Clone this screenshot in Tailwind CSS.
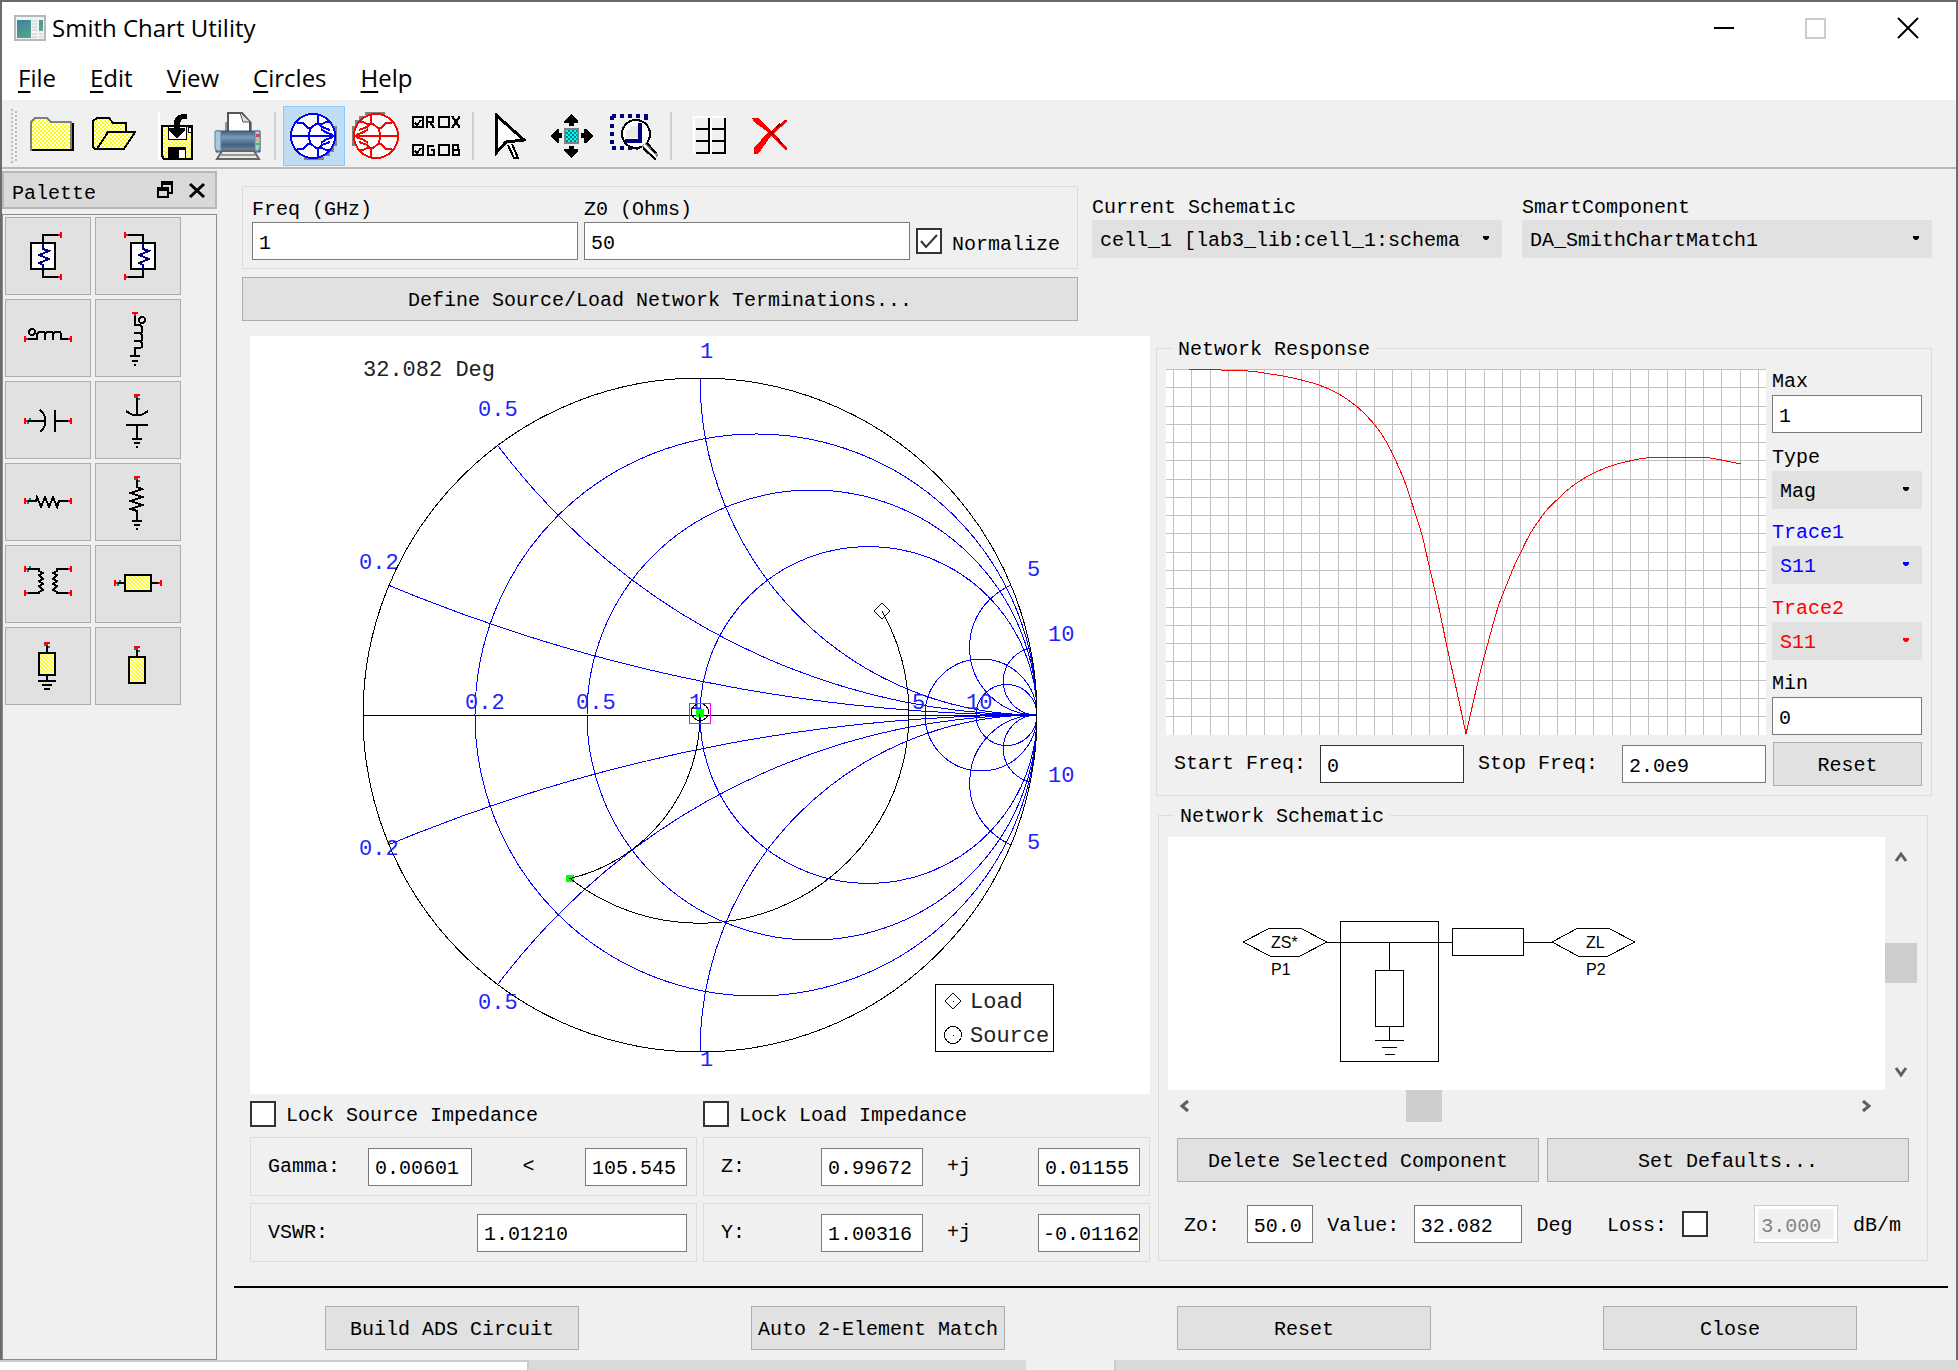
<!DOCTYPE html>
<html lang="en">

<head>
   <meta charset="UTF-8">
   <meta name="viewport" content="width=device-width, initial-scale=1.0">
   <title>Smith Chart Utility</title>
   <script src="https://cdn.jsdelivr.net/npm/@tailwindcss/browser@4"></script>
</head>

<body class="flex min-h-screen flex-col bg-[#f0f0f0] font-['Liberation_Mono',monospace] text-xl leading-6 text-black">
   <!-- shared patterns and icon parts -->
   <svg class="absolute size-0" aria-hidden="true">
      <defs>
         <pattern id="yellow" width="4" height="4" patternUnits="userSpaceOnUse">
            <path fill="#fff" stroke="none" d="M0 0h4v4H0z" />
            <path fill="#ff0" stroke="none" d="M0 0h2v2H0zM2 2h2v2H2z" />
         </pattern>
         <pattern id="cyan" width="4" height="4" patternUnits="userSpaceOnUse">
            <path fill="#0ff" stroke="none" d="M0 0h4v4H0z" />
            <path fill="#008080" stroke="none" d="M0 0h2v2H0zM2 2h2v2H2z" />
         </pattern>
         <symbol id="smith" viewBox="0 0 48 48">
            <path fill="#808080" d="M44 14h3v20h-3v6h-4v4h-6v4H14v-3h20z" />
            <circle cx="23" cy="24" r="22" fill="#fff" stroke="none" />
            <g fill="none" stroke="currentColor" stroke-width="2" shape-rendering="crispEdges">
               <circle cx="23" cy="24" r="22" />
               <path d="M1 24h44M32 12h-6l-5 4-2 5v6l2 5 5 4h6M7 11h6l5 5 3 1M7 37h6l5-5 3-1M28 3v8l4 4 8 3M28 45v-8l4-4 8-3M32 12l4-2h5M32 36l4 2h5M31 17l4 3 8 3M31 31l4-3 8-3" />
            </g>
         </symbol>
      </defs>
   </svg>

   <div class="flex flex-1 flex-col border-x-2 border-t-2 border-[#6b6b6b]">
      <header class="flex h-13 items-center justify-between bg-white pr-9 pl-3 font-['Open_Sans',sans-serif] text-2xl">
         <div class="flex items-center gap-[6px]">
            <svg class="h-7 w-8" viewBox="0 0 32 28">
               <defs>
                  <linearGradient id="app" x2="1" y2="1">
                     <stop stop-color="#3c7fa8" />
                     <stop offset="1" stop-color="#63b573" />
                  </linearGradient>
               </defs>
               <path fill="#f1f3f4" stroke="#b3b9bd" stroke-width="2" d="M1 2h30v24H1z" />
               <path fill="url(#app)" d="M3 6h14v18H3zM25 6h4v11h-4z" />
               <path stroke="#c4c8cb" d="M18 7h5M18 10h5M18 13h5M18 16h5M18 20h5M18 23h5M25 20h4M25 23h4" />
            </svg>
            <h1>Smith Chart Utility</h1>
         </div>
         <div class="flex items-center gap-17">
            <button type="button" aria-label="Minimize"><svg class="size-6" viewBox="0 0 24 24"><path stroke="#000" stroke-width="2" d="M2 12h20" /></svg></button>
            <button type="button" aria-label="Maximize" disabled><svg class="size-6" viewBox="0 0 24 24"><path fill="none" stroke="#ccc" stroke-width="2" d="M2 3h19v19H2z" /></svg></button>
            <button type="button" aria-label="Close window"><svg class="size-6" viewBox="0 0 24 24"><path stroke="#000" stroke-width="2" d="m2 2 20 20M22 2 2 22" /></svg></button>
         </div>
      </header>

      <nav class="flex h-12 items-center gap-[34px] border-b-2 border-[#eee] bg-white pt-[2px] pl-4 font-['Open_Sans',sans-serif] text-2xl">
         <a href="#"><u class="underline-offset-4">F</u>ile</a>
         <a href="#"><u class="underline-offset-4">E</u>dit</a>
         <a href="#"><u class="underline-offset-4">V</u>iew</a>
         <a href="#"><u class="underline-offset-4">C</u>ircles</a>
         <a href="#"><u class="underline-offset-4">H</u>elp</a>
      </nav>

      <div class="flex h-[67px] items-center border-b-2 border-[#b9b9b9] pt-[2px] pl-1" role="toolbar">
         <svg class="mx-1 h-14 w-2" viewBox="0 0 8 56"><path stroke="#bbb" stroke-width="2" stroke-dasharray="2 2" d="M2 1v54M6 3v52" /></svg>
         <button type="button" aria-label="New" class="flex w-15 justify-center">
            <svg class="h-12 w-11" viewBox="0 0 44 48" shape-rendering="crispEdges">
               <path fill="url(#yellow)" stroke="#808080" stroke-width="2" d="M1 38V10l4-4h12l4 4h20v28z" />
               <path fill="none" stroke="#000" stroke-width="2" d="M2 38h41V11" />
            </svg>
         </button>
         <button type="button" aria-label="Open" class="flex w-16 justify-center">
            <svg class="h-12 w-11" viewBox="0 0 44 48" shape-rendering="crispEdges">
               <path fill="url(#yellow)" stroke="#000" stroke-width="2" d="M1 36V9l4-3h12l4 5h13v9M1 36l4 1 11-17h27L32 37H4z" />
            </svg>
         </button>
         <button type="button" aria-label="Save" class="mr-5 ml-3 flex w-9 justify-center border-l-2 border-white">
            <svg class="h-12 w-8" viewBox="0 0 32 48" shape-rendering="crispEdges">
               <path fill="url(#yellow)" stroke="#000" stroke-width="2" d="M1 14h30v33H3l-2-3z" />
               <path fill="#fff" stroke="#000" d="M7 14h18v13H7zM27 15h3v5h-3z" />
               <path d="M7 35h18v12H7zM8 16h16v3l-8 7-8-7zM13 18V9l3-5 5-2h5v5h-5l-2 4v7z" />
               <path fill="#fff" d="M18 38h6v8h-6z" />
            </svg>
         </button>
         <button type="button" aria-label="Print">
            <svg class="h-12 w-12" viewBox="0 0 48 48">
               <defs>
                  <linearGradient id="prn" x2="0" y2="1">
                     <stop stop-color="#405d7c" />
                     <stop offset=".3" stop-color="#7d9ab8" />
                     <stop offset=".65" stop-color="#43607e" />
                     <stop offset="1" stop-color="#7693ad" />
                  </linearGradient>
               </defs>
               <path fill="#7e9aaf" d="M11 10h27v12H11z" />
               <path fill="#fff" stroke="#555" stroke-width="2" d="M14 21V1h14l8 9v11z" />
               <path fill="#ddd" stroke="#555" d="m26 1 3 9h7" />
               <path fill="url(#prn)" stroke="#395471" d="M2 19h44v21H2z" />
               <path fill="#a3cbdc" stroke="#5d8198" d="M1 19h6v20H3l-2-3zM41 19h5v17l-2 3h-3z" />
               <path fill="#d9415a" d="M42 22h4v3h-4z" />
               <path fill="#e9b04a" d="M42 27h4v2h-4z" />
               <path fill="#55b277" d="M42 31h4v2h-4z" />
               <path fill="#e8e8e8" stroke="#666" stroke-width="2" d="M8 39h32l5 8H3z" />
               <path stroke="#999" stroke-width="2" d="M7 43h34" />
            </svg>
         </button>
         <div class="ml-3 h-12 w-[2px] bg-[#cfcfcf]"></div>
         <button type="button" aria-label="Impedance chart" aria-pressed="true" class="ml-[7px] flex h-15 w-[62px] items-center justify-center border border-[#90c8f6] bg-[#c0dcf3] text-[#00f]"><svg class="size-12"><use href="#smith" /></svg></button>
         <button type="button" aria-label="Admittance chart" class="flex w-15 justify-center text-[#f00]"><svg class="size-12 rotate-180"><use href="#smith" /></svg></button>
         <button type="button" aria-label="R X G B circles" class="ml-[7px]">
            <svg class="h-12 w-12" viewBox="0 0 48 48" fill="none" stroke="#000" stroke-width="2" shape-rendering="crispEdges">
               <path d="M1 5h10v10H1zM27 5h10v10H27zM1 33h10v10H1zM27 33h10v10H27zM3 11l2 2 4-5M3 39l2 2 4-5M15 16V5h6v5h-6M18 10l4 6M40 4l8 12M48 4l-8 12M22 34h-6v9h6v-5h-3M41 43V33h5v5h-5 6v5z" />
            </svg>
         </button>
         <div class="ml-3 h-12 w-[2px] bg-[#cfcfcf]"></div>
         <button type="button" aria-label="Select" class="ml-5">
            <svg class="h-12 w-8" viewBox="0 0 32 48" shape-rendering="crispEdges"><path fill="#fff" stroke="#000" stroke-width="2" d="m14 33 6 13h4l-6-14" /><path fill="#fff" stroke="#000" stroke-width="3" d="M2 3v38l10-11 18-2z" /></svg>
         </button>
         <button type="button" aria-label="Move" class="ml-6">
            <svg class="h-12 w-11" viewBox="0 0 44 48" shape-rendering="crispEdges">
               <path fill="url(#cyan)" stroke="#808080" stroke-width="2" d="M15 17h13v14H15z" />
               <path d="m21 2 7 7v2h-4v3h-5v-3h-5V9zM21 46l7-7v-2h-4v-3h-5v3h-5v2zM0 24l7-7h2v4h3v5H9v5H7zM43 24l-7-7h-2v4h-3v5h3v5h2z" />
            </svg>
         </button>
         <button type="button" aria-label="Zoom area" class="ml-4">
            <svg class="h-12 w-12" viewBox="0 0 48 48" shape-rendering="crispEdges">
               <path fill="none" stroke="#000080" stroke-width="4" stroke-dasharray="4 4" d="M2 4h36M2 4v32M2 36h26M36 4v10" />
               <circle cx="26" cy="22" r="14" fill="#fff" stroke="#000" stroke-width="2" />
               <path fill="none" stroke="#000080" stroke-width="4" d="M30 11v18H15" />
               <path fill="#e8e8e8" d="M16 18h4v-4h8v12H16z" />
               <path stroke="#808080" stroke-width="6" d="m34 32 12 13" />
               <path stroke="#fff" stroke-width="2" d="m34 33 12 12" />
               <path stroke="#000" stroke-width="2" d="m37 31 9 10M33 36l13 12" />
            </svg>
         </button>
         <div class="ml-3 h-12 w-[2px] bg-[#cfcfcf]"></div>
         <button type="button" aria-label="Grid" class="ml-5">
            <svg class="h-12 w-9" viewBox="0 0 36 48" shape-rendering="crispEdges" fill="none" stroke-width="2"><path stroke="#fff" d="M2 42V5h32M19 5v36" /><path stroke="#000" d="M4 41h12M4 29h13M4 17h13M17 6v36M20 41h13M20 29h13M20 17h13M33 6v36" /></svg>
         </button>
         <button type="button" aria-label="Delete" class="ml-6">
            <svg class="h-12 w-9" viewBox="0 0 36 48" shape-rendering="crispEdges"><path fill="#f00" d="M0 6h6l13 13L33 8h2v2L22 21l13 15v2h-2L19 24 6 42H2v-6l14-16L3 11z" /><path stroke="#900000" stroke-width="2" d="M17 20h5M18 22h4M24 16l4-4M25 26l5 6" /></svg>
         </button>
      </div>

      <div class="flex flex-1">
         <aside class="flex w-[215px] flex-col pt-[2px]">
            <div class="flex h-[38px] items-center justify-between border-2 border-[#b8b8b8] bg-[#d9d9d9] pr-2 pl-2">
               <h2 class="pt-2">Palette</h2>
               <div class="flex gap-3">
                  <button type="button" aria-label="Float"><svg class="size-5" viewBox="0 0 20 20" shape-rendering="crispEdges"><path d="M6 1h12v13h-4v4H2V7h4zM8 5v2h6v5h2V5zM4 11v5h8v-5z" fill-rule="evenodd" /></svg></button>
                  <button type="button" aria-label="Close palette"><svg class="size-5" viewBox="0 0 20 20"><path stroke="#000" stroke-width="3" d="m3 4 14 13M17 4 3 17" /></svg></button>
               </div>
            </div>
            <div class="mt-[5px] flex-1 border border-[#868c94] p-[2px]">
               <div class="grid w-44 grid-cols-2 gap-1 [&>button]:h-[78px] [&>button]:border [&>button]:border-[#adadad] [&>button]:bg-[#e1e1e1] [&_svg]:h-[76px] [&_svg]:w-[84px]">
                  <button type="button" aria-label="Load termination">
                     <svg viewBox="1 1 84 76" shape-rendering="crispEdges" fill="none" stroke="#000" stroke-width="2">
                        <path fill="#fff" d="M26 26h24v26H26z" /><path d="M38 26v-8h16M38 52v8h16" />
                        <path stroke="#000080" d="M38 27v5l6 2-10 4 10 4-10 4 4 2v4" />
                        <path stroke="#f00" d="M53 18h3M56 15v6M53 60h3M56 57v6" />
                     </svg>
                  </button>
                  <button type="button" aria-label="Source termination">
                     <svg viewBox="1 1 84 76" shape-rendering="crispEdges" fill="none" stroke="#000" stroke-width="2">
                        <path fill="#fff" d="M36 26h24v26H36z" /><path d="M48 26v-8H32M48 52v8H32" />
                        <path stroke="#000080" d="M48 27v5l6 2-10 4 10 4-10 4 4 2v4" />
                        <path stroke="#f00" d="M33 18h-3M30 15v6M33 60h-3M30 57v6" />
                     </svg>
                  </button>
                  <button type="button" aria-label="Series inductor">
                     <svg viewBox="1 1 84 76" shape-rendering="crispEdges" fill="none" stroke="#000" stroke-width="2">
                        <path d="M22 40h10v-5l2-2h5l1 2v6M40 35l2-2h5l1 2v6M48 35l2-2h5l1 2v5h9" /><circle cx="27" cy="33" r="3" />
                        <path stroke="#f00" d="M20 37v6M20 40h3M66 37v6M63 40h3" />
                     </svg>
                  </button>
                  <button type="button" aria-label="Shunt inductor">
                     <svg viewBox="1 1 84 76" shape-rendering="crispEdges" fill="none" stroke="#000" stroke-width="2">
                        <path d="M40 15v11h5l2 2v5l-2 1h-6M45 34l2 2v5l-2 1h-6M45 42l2 2v4l-2 1h-5v8M35 57h10M37 62h6M39 66h2" /><circle cx="47" cy="21" r="3" />
                        <path stroke="#f00" d="M37 14h6M40 14v3" />
                     </svg>
                  </button>
                  <button type="button" aria-label="Series capacitor">
                     <svg viewBox="1 1 84 76" shape-rendering="crispEdges" fill="none" stroke="#000" stroke-width="2">
                        <path d="M22 40h18M35 29l3 3 2 4v8l-2 4-3 3M50 29v22M50 40h15" />
                        <path stroke="#008080" d="M22 42h2M24 38h2" /><path stroke="#f00" d="M20 37v6M20 40h3M66 37v6M63 40h3" />
                     </svg>
                  </button>
                  <button type="button" aria-label="Shunt capacitor">
                     <svg viewBox="1 1 84 76" shape-rendering="crispEdges" fill="none" stroke="#000" stroke-width="2">
                        <path d="M42 15v18M31 30l3 2 4 2h8l4-2 3-2M31 44h22M42 44v14M37 58h10M39 62h6M41 66h2" />
                        <path stroke="#008080" d="M39 16h2M43 18h2" /><path stroke="#f00" d="M39 14h6M42 14v3" />
                     </svg>
                  </button>
                  <button type="button" aria-label="Series resistor">
                     <svg viewBox="1 1 84 76" shape-rendering="crispEdges" fill="none" stroke="#000" stroke-width="2">
                        <path d="M22 38h9l1-4 4 10 4-10 4 10 4-10 4 10 2-6h11" />
                        <path stroke="#008080" d="M22 40h2M24 36h2" /><path stroke="#f00" d="M20 35v6M20 38h3M66 35v6M63 38h3" />
                     </svg>
                  </button>
                  <button type="button" aria-label="Shunt resistor">
                     <svg viewBox="1 1 84 76" shape-rendering="crispEdges" fill="none" stroke="#000" stroke-width="2">
                        <path d="M42 15v9l5 2-11 4 11 4-11 4 11 4-11 4 6 2v10M37 58h10M39 62h6M41 66h2" />
                        <path stroke="#008080" d="M39 16h2M43 18h2" /><path stroke="#f00" d="M39 14h6M42 14v3" />
                     </svg>
                  </button>
                  <button type="button" aria-label="Transformer">
                     <svg viewBox="1 1 84 76" shape-rendering="crispEdges" fill="none" stroke="#000" stroke-width="2">
                        <path d="M22 24h12v2l4 2-4 2 4 4-4 2 4 3-4 2 4 4-4 2v1H22M64 24H52v2l-4 2 4 2-4 4 4 2-4 3 4 2-4 4 4 2v1h12" />
                        <path stroke="#008080" d="M22 26h2M24 22h2" /><path stroke="#f00" d="M20 21v6M20 24h3M66 21v6M63 24h3M20 45v6M20 48h3M66 45v6M63 48h3" />
                     </svg>
                  </button>
                  <button type="button" aria-label="Series line">
                     <svg viewBox="1 1 84 76" shape-rendering="crispEdges" fill="none" stroke="#000" stroke-width="2">
                        <path d="M22 38h8M57 38h8" /><path fill="url(#yellow)" d="M30 30h26v16H30z" />
                        <path stroke="#008080" d="M22 40h2M24 36h2" /><path stroke="#f00" d="M20 35v6M20 38h3M66 35v6M63 38h3" />
                     </svg>
                  </button>
                  <button type="button" aria-label="Shorted stub">
                     <svg viewBox="1 1 84 76" shape-rendering="crispEdges" fill="none" stroke="#000" stroke-width="2">
                        <path d="M42 17v8M42 49v5M33 54h18M37 58h10M39 62h6" /><path fill="url(#yellow)" d="M34 26h16v22H34z" />
                        <path stroke="#008080" d="M39 18h2M43 20h2" /><path stroke="#f00" d="M39 16h6M42 16v3" />
                     </svg>
                  </button>
                  <button type="button" aria-label="Open stub">
                     <svg viewBox="1 1 84 76" shape-rendering="crispEdges" fill="none" stroke="#000" stroke-width="2">
                        <path d="M42 21v8" /><path fill="url(#yellow)" d="M34 30h16v26H34z" />
                        <path stroke="#008080" d="M39 22h2M43 24h2" /><path stroke="#f00" d="M39 20h6M42 20v3" />
                     </svg>
                  </button>
               </div>
            </div>
         </aside>

         <main class="min-w-0 flex-1 pt-[17px] pr-2 pl-[17px]">
            <div class="pr-4 pl-2">
               <div class="grid grid-cols-[836fr_840fr] gap-[14px]">
                  <div>
                     <div class="flex h-[83px] items-end gap-[6px] border border-[#dcdcdc] px-[9px] pb-2">
                        <div class="flex-1">
                           <label for="freq" class="block">Freq (GHz)</label>
                           <input id="freq" type="text" value="1" class="h-[38px] w-full border border-[#7a7a7a] bg-white px-[6px] pt-1">
                        </div>
                        <div class="flex-1">
                           <label for="z0" class="block">Z0 (Ohms)</label>
                           <input id="z0" type="text" value="50" class="h-[38px] w-full border border-[#7a7a7a] bg-white px-[6px] pt-1">
                        </div>
                        <label class="flex h-[38px] items-center gap-[10px] pr-2">
                           <span class="relative size-[26px]">
                              <input type="checkbox" checked class="block size-[26px] appearance-none border-2 border-[#333] bg-white">
                              <svg class="pointer-events-none absolute inset-0 size-[26px]" viewBox="0 0 26 26"><path fill="none" stroke="#333" stroke-width="2" d="m5 13 5 6L21 7" /></svg>
                           </span>
                           <span class="pt-2">Normalize</span>
                        </label>
                     </div>
                     <button type="button" class="mt-2 h-11 w-full border border-[#adadad] bg-[#e1e1e1] pt-1">Define Source/Load Network Terminations...</button>
                  </div>
                  <div class="grid grid-cols-2 gap-5 pt-[10px]">
                     <div>
                        <label for="schematic" class="block">Current Schematic</label>
                        <div class="relative">
                           <select id="schematic" class="h-[38px] w-full appearance-none overflow-hidden bg-[#e1e1e1] pt-1 pr-10 pl-2 text-clip"><option>cell_1 [lab3_lib:cell_1:schematic]</option></select>
                           <svg class="pointer-events-none absolute top-4 right-3 h-1 w-2" viewBox="0 0 8 4"><path fill="currentColor" d="M1 0h6v2L5 4H3L1 2z" /></svg>
                        </div>
                     </div>
                     <div>
                        <label for="smart" class="block">SmartComponent</label>
                        <div class="relative">
                           <select id="smart" class="h-[38px] w-full appearance-none bg-[#e1e1e1] pt-1 pl-2"><option>DA_SmithChartMatch1</option></select>
                           <svg class="pointer-events-none absolute top-4 right-3 h-1 w-2" viewBox="0 0 8 4"><path fill="currentColor" d="M1 0h6v2L5 4H3L1 2z" /></svg>
                        </div>
                     </div>
                  </div>
               </div>

               <div class="mt-[15px] grid grid-cols-[908fr_776fr] items-start gap-[6px]">
                  <div class="pl-2">
                     <!-- centre 450,379, unit radius 337 -->
                     <svg class="block h-auto w-full bg-white" viewBox="0 0 900 758" fill="none">
                        <defs>
                           <clipPath id="unit"><circle cx="450" cy="379" r="337" /></clipPath>
                        </defs>
                        <g stroke="#00f" stroke-width="1" shape-rendering="crispEdges">
                           <circle cx="506" cy="379" r="281" />
                           <circle cx="562" cy="379" r="225" />
                           <circle cx="618.5" cy="379" r="168.5" />
                           <circle cx="731" cy="379" r="56" />
                           <circle cx="756.5" cy="379" r="30.5" />
                           <g clip-path="url(#unit)">
                              <circle cx="787" cy="-1306" r="1685" />
                              <circle cx="787" cy="2064" r="1685" />
                              <circle cx="787" cy="-295" r="674" />
                              <circle cx="787" cy="1053" r="674" />
                              <circle cx="787" cy="42" r="337" />
                              <circle cx="787" cy="716" r="337" />
                              <circle cx="787" cy="311.6" r="67.4" />
                              <circle cx="787" cy="446.4" r="67.4" />
                              <circle cx="787" cy="345.3" r="33.7" />
                              <circle cx="787" cy="412.7" r="33.7" />
                           </g>
                        </g>
                        <g class="font-['Liberation_Mono',monospace] text-[22px]" fill="#22f">
                           <text x="450" y="22">1</text>
                           <text x="228" y="80">0.5</text>
                           <text x="109" y="233">0.2</text>
                           <text x="777" y="240">5</text>
                           <text x="798" y="305">10</text>
                           <text x="215" y="373">0.2</text>
                           <text x="326" y="373">0.5</text>
                           <text x="439" y="373">1</text>
                           <text x="662" y="373">5</text>
                           <text x="716" y="373">10</text>
                           <text x="798" y="446">10</text>
                           <text x="777" y="513">5</text>
                           <text x="109" y="519">0.2</text>
                           <text x="228" y="673">0.5</text>
                           <text x="450" y="730">1</text>
                           <g fill="#222">
                              <text x="113" y="40">32.082 Deg</text>
                              <text x="720" y="672">Load</text>
                              <text x="720" y="706">Source</text>
                           </g>
                        </g>
                        <g stroke="#000" stroke-width="1" shape-rendering="crispEdges">
                           <circle cx="450" cy="379" r="337" />
                           <path d="M114 379.500h673" />
                           <path fill="#0f0" stroke="none" d="M316 539h8v7h-8zM446 373h8v8h-8z" />
                           <path d="M632 275A209.5 209.5 0 0 1 320 542.5A168.5 168.5 0 0 0 450 377" />
                           <path d="m632 267 8 8-8 8-8-8zM703 657l8 8-8 8-8-8zM703 665h1M703 699h1M632 275h1" />
                           <circle cx="450" cy="376" r="8.5" />
                           <circle cx="703" cy="699" r="8.5" />
                           <path d="M685.5 648.5h118v67h-118z" />
                           <path stroke="#f0f" d="M439.5 367.5h21v20h-21z" />
                        </g>
                     </svg>

                     <div class="grid grid-cols-2 gap-x-[6px] gap-y-[7px]">
                        <label class="flex h-9 items-center gap-[10px] pt-1">
                           <input type="checkbox" class="size-[26px] appearance-none border-2 border-[#333] bg-white">
                           <span class="pt-1">Lock Source Impedance</span>
                        </label>
                        <label class="flex h-9 items-center gap-[10px] pt-1">
                           <input type="checkbox" class="size-[26px] appearance-none border-2 border-[#333] bg-white">
                           <span class="pt-1">Lock Load Impedance</span>
                        </label>
                        <div class="flex h-[59px] items-center justify-between border border-[#dcdcdc] pr-[9px] pl-[17px]">
                           <label for="gamma" class="w-[100px]">Gamma:</label>
                           <input id="gamma" type="text" value="0.00601" class="h-[38px] w-[104px] border border-[#7a7a7a] bg-white pt-1 pl-[6px]">
                           <span class="flex-1 text-center">&lt;</span>
                           <input aria-label="Gamma angle" type="text" value="105.545" class="h-[38px] w-[102px] border border-[#7a7a7a] bg-white pt-1 pl-[6px]">
                        </div>
                        <div class="flex h-[59px] items-center border border-[#dcdcdc] pr-[9px] pl-[17px]">
                           <label for="z" class="w-[100px]">Z:</label>
                           <input id="z" type="text" value="0.99672" class="h-[38px] w-[102px] border border-[#7a7a7a] bg-white pt-1 pl-[6px]">
                           <span class="flex-1 pl-6">+j</span>
                           <input aria-label="Z imaginary" type="text" value="0.01155" class="h-[38px] w-[102px] border border-[#7a7a7a] bg-white pt-1 pl-[6px]">
                        </div>
                        <div class="flex h-[59px] items-center justify-between border border-[#dcdcdc] pr-[9px] pl-[17px]">
                           <label for="vswr">VSWR:</label>
                           <input id="vswr" type="text" value="1.01210" class="h-[38px] w-[210px] border border-[#7a7a7a] bg-white pt-1 pl-[6px]">
                        </div>
                        <div class="flex h-[59px] items-center border border-[#dcdcdc] pr-[9px] pl-[17px]">
                           <label for="y" class="w-[100px]">Y:</label>
                           <input id="y" type="text" value="1.00316" class="h-[38px] w-[102px] border border-[#7a7a7a] bg-white pt-1 pl-[6px]">
                           <span class="flex-1 pl-6">+j</span>
                           <input aria-label="Y imaginary" type="text" value="-0.01162" class="h-[38px] w-[102px] border border-[#7a7a7a] bg-white pt-1 pl-[4px]">
                        </div>
                     </div>
                  </div>

                  <div>
                     <fieldset class="border border-[#dcdcdc] px-[9px] pt-[9px] pb-[9px]">
                        <legend class="ml-[6px] px-[6px] pt-1 leading-5">Network Response</legend>
                        <div class="flex gap-[6px]">
                           <svg class="block h-[366px] min-w-0 flex-1 bg-white" viewBox="0 0 600 366" preserveAspectRatio="none" fill="none">
                              <path id="grid" stroke="#c0c0c0" shape-rendering="crispEdges" />
                              <path id="s11" stroke="#f00" shape-rendering="crispEdges" />
                           </svg>
                           <div class="flex w-[150px] flex-col justify-between">
                              <div>
                                 <label for="max" class="block leading-[26px]">Max</label>
                                 <input id="max" type="text" value="1" class="block h-[38px] w-full border border-[#7a7a7a] bg-white px-[6px] pt-1">
                              </div>
                              <div>
                                 <label for="type" class="block leading-[26px]">Type</label>
                                 <div class="relative">
                                    <select id="type" class="block h-[38px] w-full appearance-none bg-[#e1e1e1] pt-1 pl-2"><option>Mag</option></select>
                                    <svg class="pointer-events-none absolute top-4 right-3 h-1 w-2" viewBox="0 0 8 4"><path fill="currentColor" d="M1 0h6v2L5 4H3L1 2z" /></svg>
                                 </div>
                              </div>
                              <div class="text-[#00f]">
                                 <label for="trace1" class="block leading-[26px]">Trace1</label>
                                 <div class="relative">
                                    <select id="trace1" class="block h-[38px] w-full appearance-none bg-[#e1e1e1] pt-1 pl-2"><option>S11</option></select>
                                    <svg class="pointer-events-none absolute top-4 right-3 h-1 w-2" viewBox="0 0 8 4"><path fill="currentColor" d="M1 0h6v2L5 4H3L1 2z" /></svg>
                                 </div>
                              </div>
                              <div class="text-[#f00]">
                                 <label for="trace2" class="block leading-[26px]">Trace2</label>
                                 <div class="relative">
                                    <select id="trace2" class="block h-[38px] w-full appearance-none bg-[#e1e1e1] pt-1 pl-2"><option>S11</option></select>
                                    <svg class="pointer-events-none absolute top-4 right-3 h-1 w-2" viewBox="0 0 8 4"><path fill="currentColor" d="M1 0h6v2L5 4H3L1 2z" /></svg>
                                 </div>
                              </div>
                              <div>
                                 <label for="min" class="block leading-[26px]">Min</label>
                                 <input id="min" type="text" value="0" class="block h-[38px] w-full border border-[#7a7a7a] bg-white px-[6px] pt-1">
                              </div>
                           </div>
                        </div>
                        <div class="mt-[7px] flex items-center pl-2">
                           <label for="start">Start Freq:</label>
                           <input id="start" type="text" value="0" class="ml-[14px] h-[38px] w-36 border border-[#333] bg-white px-[6px] pt-1">
                           <label for="stop" class="ml-[14px] flex-1">Stop Freq:</label>
                           <input id="stop" type="text" value="2.0e9" class="h-[38px] w-36 border border-[#7a7a7a] bg-white px-[6px] pt-1">
                           <button type="button" class="ml-[7px] h-11 w-[149px] border border-[#adadad] bg-[#e1e1e1] pt-1">Reset</button>
                        </div>
                     </fieldset>

                     <fieldset class="mt-[7px] mr-1 ml-[2px] border border-[#dcdcdc] pt-[10px] pr-[10px] pb-[17px] pl-[9px]">
                        <legend class="ml-[6px] px-[6px] pt-1 leading-5">Network Schematic</legend>
                        <div class="grid grid-cols-[1fr_32px] grid-rows-[253px_32px]">
                           <div class="overflow-hidden bg-white">
                              <svg class="h-[253px] w-[717px]" viewBox="0 0 717 253" fill="none" stroke="#000" shape-rendering="crispEdges">
                                 <path d="m75 105 27-14h30l27 14-27 14h-30zM384 105l26-14h30l27 14-27 14h-30zM159 105.500h125M355 105.500h29M172.500 84.500h98v140h-98zM284.500 91.500h71v27h-71zM221.500 105v28M207.500 133.500h28v56h-28zM221.500 189v14M207 203.500h29M214 210.500h15M217 217.500h10" />
                                 <g class="font-['Liberation_Sans',sans-serif] text-base" fill="#000" stroke="none">
                                    <text x="103" y="111">ZS*</text>
                                    <text x="103" y="138">P1</text>
                                    <text x="418" y="111">ZL</text>
                                    <text x="418" y="138">P2</text>
                                 </g>
                              </svg>
                           </div>
                           <div class="flex flex-col items-center">
                              <button type="button" aria-label="Scroll up" class="flex h-10 items-center"><svg class="h-4 w-4" viewBox="0 0 16 16"><path fill="none" stroke="#606060" stroke-width="3" d="m3 12 5-7 5 7" /></svg></button>
                              <div class="mt-[66px] h-10 w-full bg-[#cdcdcd]"></div>
                              <button type="button" aria-label="Scroll down" class="mt-auto flex h-9 items-center"><svg class="h-4 w-4" viewBox="0 0 16 16"><path fill="none" stroke="#606060" stroke-width="3" d="m3 4 5 7 5-7" /></svg></button>
                           </div>
                           <div class="flex items-center">
                              <button type="button" aria-label="Scroll left" class="flex w-8 justify-center"><svg class="h-4 w-4" viewBox="0 0 16 16"><path fill="none" stroke="#606060" stroke-width="3" d="M12 3 6 8l6 5" /></svg></button>
                              <div class="ml-[206px] h-full w-9 bg-[#cdcdcd]"></div>
                              <button type="button" aria-label="Scroll right" class="ml-auto flex w-9 justify-center"><svg class="h-4 w-4" viewBox="0 0 16 16"><path fill="none" stroke="#606060" stroke-width="3" d="m4 3 6 5-6 5" /></svg></button>
                           </div>
                        </div>
                        <div class="mt-4 grid grid-cols-2 gap-2 pr-2 pl-[9px]">
                           <button type="button" class="h-11 border border-[#adadad] bg-[#e1e1e1] pt-1">Delete Selected Component</button>
                           <button type="button" class="h-11 border border-[#adadad] bg-[#e1e1e1] pt-1">Set Defaults...</button>
                        </div>
                        <div class="mt-[23px] flex items-center justify-between pr-4 pl-4">
                           <label for="zo" class="pt-1">Zo:</label>
                           <input id="zo" type="text" value="50.0" class="ml-3 h-[38px] w-[66px] border border-[#7a7a7a] bg-white pt-1 pl-[6px]">
                           <label for="value" class="pt-1">Value:</label>
                           <input id="value" type="text" value="32.082" class="h-[38px] w-[108px] border border-[#7a7a7a] bg-white pt-1 pl-[6px]">
                           <span class="pt-1">Deg</span>
                           <label for="loss" class="ml-5 pt-1">Loss:</label>
                           <input id="loss" type="checkbox" class="size-[26px] appearance-none border-2 border-[#333] bg-white">
                           <input aria-label="Loss in dB/m" type="text" value="3.000" disabled class="ml-8 h-[38px] w-[84px] border border-[#ccc] bg-[#f0f0f0] pt-1 pl-[6px] text-[#838383] inset-ring-3 inset-ring-white">
                           <span class="pt-1">dB/m</span>
                        </div>
                     </fieldset>
                  </div>
               </div>
            </div>

            <hr class="mt-6 border-t-2 border-black">
            <div class="mt-[18px] grid grid-cols-4 justify-items-center px-[5px] pb-[9px]">
               <button type="button" class="h-11 w-[254px] border border-[#adadad] bg-[#e1e1e1] pt-1">Build ADS Circuit</button>
               <button type="button" class="h-11 w-[254px] border border-[#adadad] bg-[#e1e1e1] pt-1">Auto 2-Element Match</button>
               <button type="button" class="h-11 w-[254px] border border-[#adadad] bg-[#e1e1e1] pt-1">Reset</button>
               <button type="button" class="h-11 w-[254px] border border-[#adadad] bg-[#e1e1e1] pt-1">Close</button>
            </div>
         </main>
      </div>
   </div>

   <!-- edge of the window behind -->
   <div class="flex h-[10px]">
      <div class="w-[27%] border-t-2 border-r-2 border-[#ccc] bg-white"></div>
      <div class="flex-1 bg-[#d9d9d9]"></div>
      <div class="w-[90px] border-r-2 border-[#ccc] bg-[#f0f0f0]"></div>
      <div class="w-[43%] bg-[#dadada]"></div>
   </div>

   <script>
      // 33 x 20 graph lines, snapped to whole pixels
      let d = "";
      for (let i = 0; i < 33; i++) {
         d += `M${Math.round(7 + i * 18.28) + 0.5} 0v366`;
      }
      for (let i = 0; i < 20; i++) {
         d += `M0 ${Math.round(i * 18.27) + 0.5}h600`;
      }
      document.getElementById("grid").setAttribute("d", d);

      // the trace falls to the match, then comes back up
      const fall = [[23, 0.5], [61, 1], [86, 2], [104, 5], [118, 7], [136, 11], [154, 16], [172, 24], [190, 36], [208, 54], [221, 73], [230, 92], [238, 110], [244, 128], [250, 147], [256, 165], [264, 201], [274, 243], [280, 274], [292, 327], [300, 365]];
      const rise = [[300, 365], [314, 303], [322, 274], [332, 237], [339, 220], [348, 197], [355, 183], [364, 164], [374, 150], [382, 139], [392, 130], [401, 121], [419, 108], [443, 97], [463, 92], [483, 88], [539, 88], [556, 91], [575, 95]];

      function curve(p) {
         let s = `M${p[0]}`;
         for (let i = 1; i < p.length - 1; i++) {
            const end = i == p.length - 2 ? p[i + 1] : [(p[i][0] + p[i + 1][0]) / 2, (p[i][1] + p[i + 1][1]) / 2];
            s += `Q${p[i]} ${end}`;
         }
         return s;
      }
      document.getElementById("s11").setAttribute("d", curve(fall) + curve(rise));
   </script>
</body>

</html>
